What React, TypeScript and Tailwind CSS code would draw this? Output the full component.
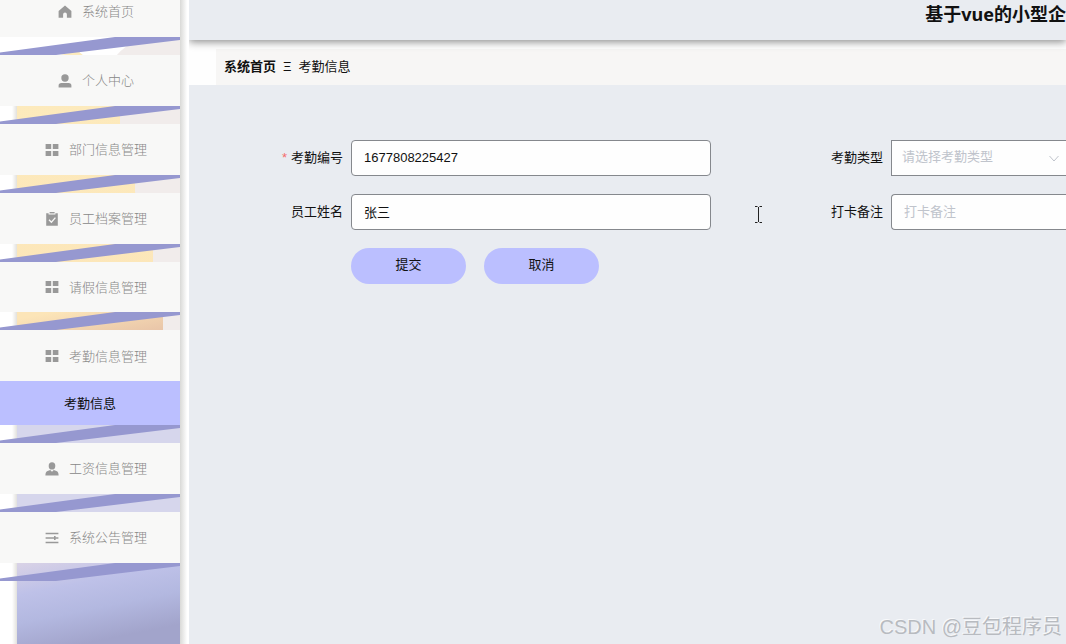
import type { ReactNode } from 'react'
import clsx from 'clsx'

interface MenuItem {
  label: string
  icon: ReactNode
  children?: string[]
}

const HomeIcon = () => (
  <svg viewBox="0 0 14 14" className="h-[14px] w-[14px] fill-current">
    <path d="M7 .6 L13.4 6 V12.8 H8.9 V9.4 A1.9 1.9 0 0 0 5.1 9.4 V12.8 H.6 V6 Z" />
  </svg>
)

const PersonIcon = () => (
  <svg viewBox="0 0 14 14" className="h-[14px] w-[14px] fill-current">
    <circle cx="7" cy="4" r="3.7" />
    <path d="M.6 13.4 V11.8 Q.6 9 3.4 9 H10.6 Q13.4 9 13.4 11.8 V13.4 Z" />
  </svg>
)

const GridIcon = () => (
  <svg viewBox="0 0 14 14" className="h-[14px] w-[14px] fill-current">
    <path d="M.6 1h5.6v5H.6zM7.8 1h5.6v5H7.8zM.6 8h5.6v5H.6zM7.8 8h5.6v5H7.8z" />
  </svg>
)

const ClipboardIcon = () => (
  <svg viewBox="0 0 14 14" className="h-[14px] w-[14px] fill-current">
    <path d="M4.6 0h5v1.4h-5z" />
    <path d="M1.2 1.2H3.6V2.6H10.4V1.2H12.8V13.8H1.2Z" />
    <path d="M4 7.8 L6.4 10.2 L10.4 5.6" fill="none" stroke="#f8f8f7" strokeWidth="1.3" />
  </svg>
)

const StaffIcon = () => (
  <svg viewBox="0 0 14 14" className="h-[14px] w-[14px] fill-current">
    <ellipse cx="7" cy="3.9" rx="3.3" ry="3.6" />
    <path d="M.4 13.4 Q.4 9.6 2.6 9 L5.2 8 L7 9.8 L8.8 8 L11.4 9 Q13.6 9.6 13.6 13.4 Z" />
  </svg>
)

const OperationIcon = () => (
  <svg viewBox="0 0 14 14" className="h-[14px] w-[14px] fill-none stroke-current" strokeWidth="1.6">
    <path d="M.6 2.5H13.4M.6 7H13.4M.6 11.5H13.4M9.8 5V9" />
  </svg>
)

const menuItems: MenuItem[] = [
  { label: '系统首页', icon: <HomeIcon /> },
  { label: '个人中心', icon: <PersonIcon /> },
  { label: '部门信息管理', icon: <GridIcon /> },
  { label: '员工档案管理', icon: <ClipboardIcon /> },
  { label: '请假信息管理', icon: <GridIcon /> },
  { label: '考勤信息管理', icon: <GridIcon />, children: ['考勤信息'] },
  { label: '工资信息管理', icon: <StaffIcon /> },
  { label: '系统公告管理', icon: <OperationIcon /> }
]

// Illustration that shows through between the menu items
function SidebarArtwork() {
  return (
    <svg
      viewBox="0 0 180 644"
      preserveAspectRatio="none"
      className="absolute inset-0 h-full w-full"
      aria-hidden="true"
    >
      <defs>
        <linearGradient id="sand" x1="0" y1="0" x2="0" y2="1">
          <stop offset="0" stopColor="#fdebbd" />
          <stop offset="1" stopColor="#fce5b8" />
        </linearGradient>
        <linearGradient id="clay" x1="0" y1="0" x2="1" y2="1">
          <stop offset="0.2" stopColor="#fce5b8" />
          <stop offset="1" stopColor="#e6c0a6" />
        </linearGradient>
        <linearGradient id="dusk" x1="0" y1="0" x2="0.4" y2="1">
          <stop offset="0" stopColor="#dad3e6" />
          <stop offset="0.35" stopColor="#bec1e8" />
          <stop offset="0.65" stopColor="#b3b8e0" />
          <stop offset="1" stopColor="#a2a4cb" />
        </linearGradient>
        <linearGradient id="edge" x1="0" y1="0" x2="1" y2="0">
          <stop offset="0" stopColor="#fff" />
          <stop offset="1" stopColor="#e2e1dd" />
        </linearGradient>
      </defs>
      <rect width="180" height="644" fill="#fff" />
      <path d="M116 56 Q124 46 142 37 H180 V345 H100 V80 Z" fill="#f1eceb" />
      <path d="M56 56 L78 51 L84 56 L120 106 V124 L135 174 V192 L153 243 V262 L163 312 V345 H17 V80 Z" fill="url(#sand)" />
      <rect x="17" y="308" width="146" height="28" fill="url(#clay)" />
      <rect x="17" y="345" width="163" height="217" fill="#d6d6ec" />
      <rect x="17" y="562" width="163" height="82" fill="url(#dusk)" />
      <rect x="12" y="80" width="5" height="564" fill="url(#edge)" />
    </svg>
  )
}

function Ribbon() {
  return (
    <svg
      viewBox="0 0 180 18"
      preserveAspectRatio="none"
      className="h-[18px] w-full shrink-0 fill-[#9698d0]"
      aria-hidden="true"
    >
      <path d="M0 15.5 L115 0 H180 V3 L56 18 H0 Z" />
    </svg>
  )
}

function Sidebar() {
  return (
    <aside className="relative z-10 w-[180px] shrink-0 overflow-hidden">
      <SidebarArtwork />
      <nav className="relative -mt-[14px] flex h-[595px] flex-col">
        {menuItems.map(item => (
          <div key={item.label} className="contents">
            <a
              href="#"
              className="flex flex-1 items-center justify-center gap-2.5 bg-[#f8f8f7] pt-px pl-3 text-[13px] font-light text-[#888]"
            >
              <span className="text-[#999]">{item.icon}</span>
              <span>{item.label}</span>
            </a>
            {item.children?.map(child => (
              <a
                key={child}
                href="#"
                className="flex h-11 shrink-0 items-center justify-center bg-[#bbbfff] text-[13px] text-[#111]"
              >
                {child}
              </a>
            ))}
            <Ribbon />
          </div>
        ))}
      </nav>
    </aside>
  )
}

interface FieldProps {
  id: string
  label: string
  required?: boolean
  children: ReactNode
}

function Field({ id, label, required, children }: FieldProps) {
  return (
    <div className="flex items-center">
      <label htmlFor={id} className="w-20 shrink-0 pr-2 text-right text-[13px] text-[#111]">
        {required && <span className="mr-1 text-[#f56c6c]">*</span>}
        {label}
      </label>
      {children}
    </div>
  )
}

const inputClass = 'h-9 border border-[#85888d] bg-[#fefefe] px-3 pb-0.5 text-[13px] text-[#111] outline-none placeholder:text-[#c0c4cc]'
const buttonClass = 'h-9 w-[115px] rounded-full bg-[#bbbfff] pb-0.5 text-[13px] text-[#111]'

function AttendanceForm() {
  return (
    <form className="pt-[55px] pl-[82px]" onSubmit={e => e.preventDefault()}>
      <div className="grid grid-cols-[540px_minmax(0,1fr)] gap-y-[18px]">
        <Field id="code" label="考勤编号" required>
          <input id="code" defaultValue="1677808225427" className={clsx(inputClass, 'w-[360px] rounded')} />
        </Field>
        <Field id="type" label="考勤类型">
          <div className="relative min-w-0 flex-1">
            <select
              id="type"
              defaultValue=""
              className="block h-9 w-full appearance-none border border-r-0 border-[#85888d] bg-[#fefefe] pb-0.5 pl-2.5 text-[13px] text-[#c0c4cc] outline-none"
            >
              <option value="">请选择考勤类型</option>
            </select>
            <svg
              viewBox="0 0 12 12"
              className="pointer-events-none absolute top-3 right-1.5 h-3 w-3 fill-none stroke-[#c0c4cc]"
            >
              <path d="M1.5 4 L6 9 L10.5 4" />
            </svg>
          </div>
        </Field>
        <Field id="name" label="员工姓名">
          <input id="name" defaultValue="张三" className={clsx(inputClass, 'w-[360px] rounded')} />
        </Field>
        <Field id="remark" label="打卡备注">
          <input
            id="remark"
            placeholder="打卡备注"
            className={clsx(inputClass, 'min-w-0 flex-1 rounded-l border-r-0')}
          />
        </Field>
        <div className="flex gap-[18px] pl-20">
          <button type="submit" className={buttonClass}>提交</button>
          <button type="button" className={buttonClass}>取消</button>
        </div>
      </div>
    </form>
  )
}

export default function App() {
  return (
    <div className="relative flex min-h-screen overflow-hidden bg-white font-['Liberation_Sans','Noto_Sans_CJK_SC',sans-serif]">
      <Sidebar />
      <div className="w-[9px] shrink-0 bg-linear-to-r from-[#d9d9d7] to-white to-80%" />

      <div className="flex min-w-0 flex-1 flex-col overflow-hidden">
        <header className="relative h-10 shrink-0 bg-[#e9ecf1] shadow-[0_2px_8px_rgba(0,0,0,0.45)]">
          <h1 className="flex h-7 items-center justify-end whitespace-nowrap font-['Noto_Sans','Noto_Sans_CJK_SC',sans-serif] text-lg font-bold text-[#111]">
            基于vue的小型企
          </h1>
        </header>

        <div className="bg-[#fefefe] pt-[9px] pl-[27px]">
          <div className="flex h-9 items-center gap-[7px] bg-[#f7f6f5] pl-2 text-[13px] text-[#111]">
            <a href="#" className="font-bold">系统首页</a>
            <span>Ξ</span>
            <span>考勤信息</span>
          </div>
        </div>

        <main className="flex-1 bg-[#e9ecf1]">
          <AttendanceForm />
        </main>
      </div>

      {/* Text cursor */}
      <svg
        viewBox="0 0 8 17"
        className="absolute top-[206px] left-[754px] h-[17px] w-2 fill-none stroke-[#222]"
        aria-hidden="true"
      >
        <path d="M1 .5H3.5M5.5 .5H8M1 16.5H3.5M5.5 16.5H8M4.5 1V16" />
      </svg>

      <div className="absolute right-1 bottom-0.5 text-xl leading-[30px] text-[#b8bbc0] [text-shadow:-1px_-1px_0_#f8f9fb]">
        CSDN @豆包程序员
      </div>
    </div>
  )
}
